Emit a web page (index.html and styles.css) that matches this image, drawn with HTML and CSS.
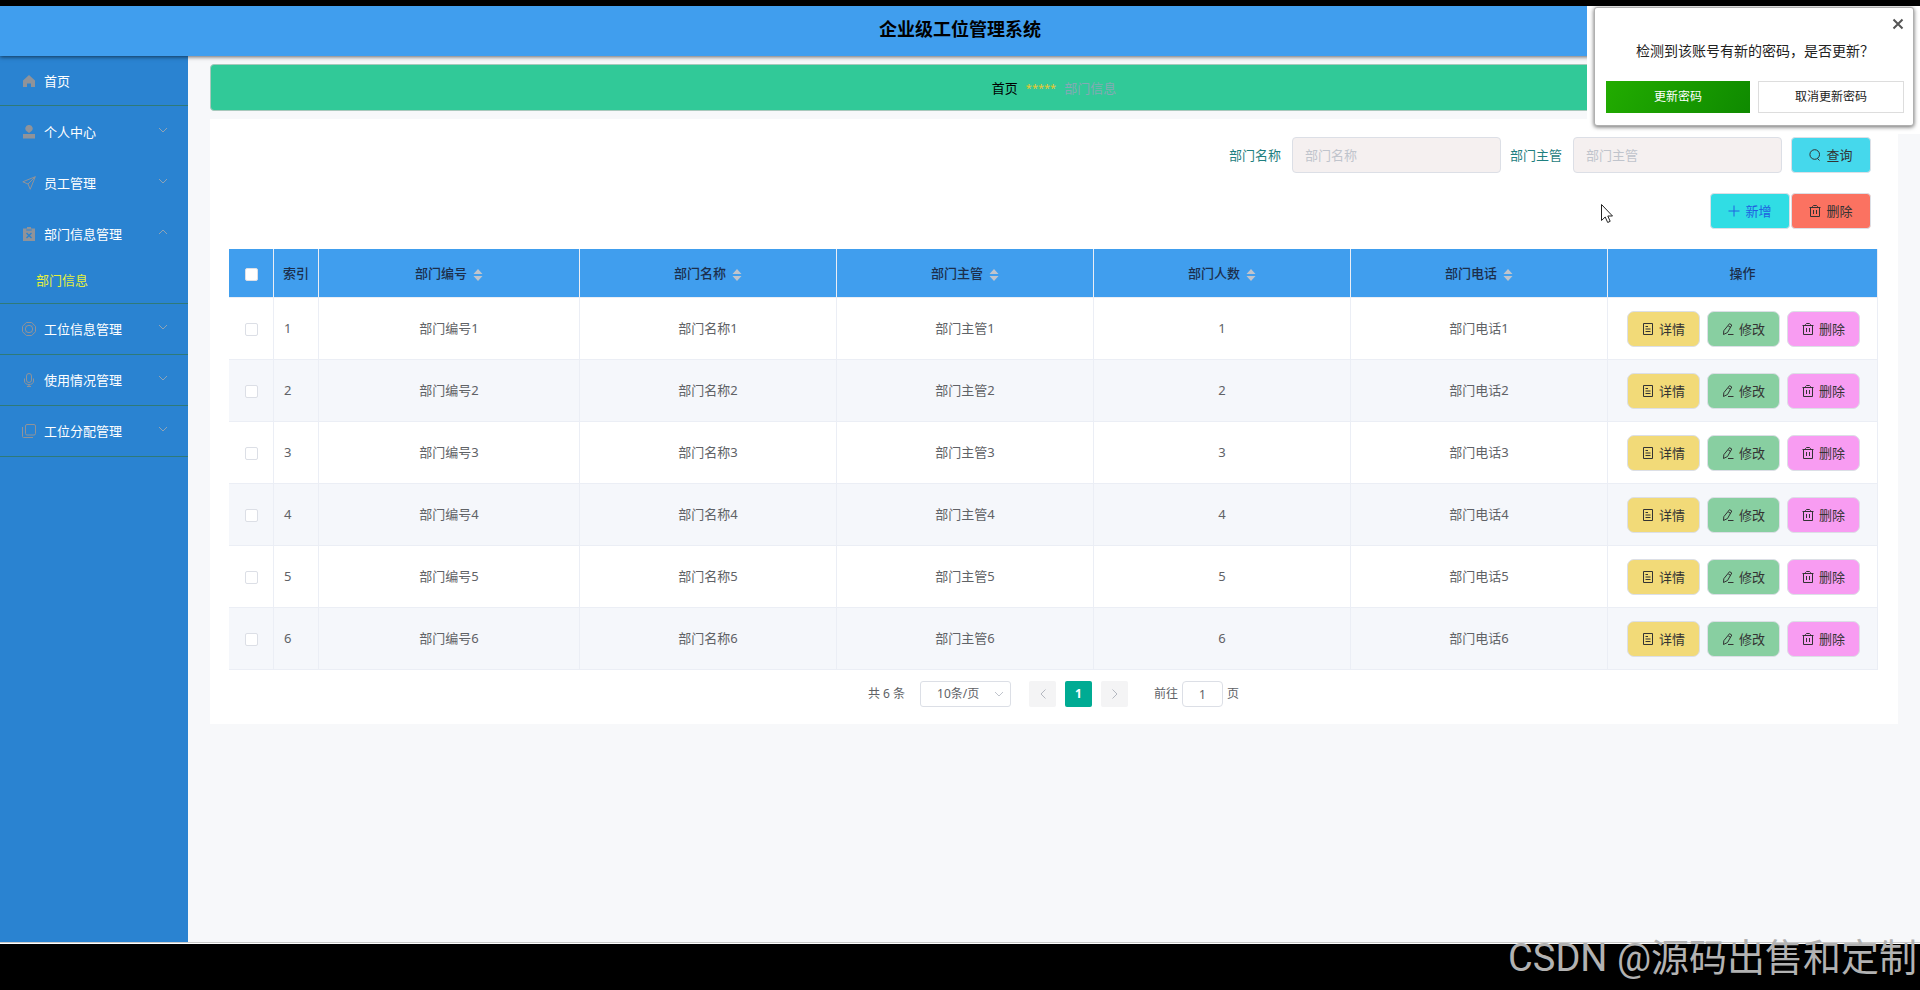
FILE: index.html
```
<!DOCTYPE html>
<html lang="zh-CN">
  <head>
    <meta charset="UTF-8" />
    <meta name="viewport" content="width=device-width, initial-scale=1.0" />
    <title>企业级工位管理系统</title>
    <link rel="stylesheet" href="styles.css">
  </head>
  <body>
    <!-- Icon set -->
    <svg class="sprite" aria-hidden="true">
      <symbol id="i-home" viewBox="0 0 14 14"><path fill="currentColor" d="M7 1 1 6.500V13h4V9.500h4V13h4V6.500z" /></symbol>
      <symbol id="i-user" viewBox="0 0 14 14"><path fill="currentColor" d="M7 0a3.500 3.500 0 0 1 2 6.500L7 8 5 6.500A3.500 3.500 0 0 1 7 0zM1 9h12v4.500H1z" /></symbol>
      <symbol id="i-send" viewBox="0 0 14 14"><path d="M13.300 .7 .8 5.800 6 8l2.200 5.300zM13.300 .7 6 8" /></symbol>
      <symbol id="i-board" viewBox="0 0 14 14"><path fill="currentColor" fill-rule="evenodd" d="M5 0h4v1.500h4V14H1V1.500h4zM4.300 2.500v1h5.400v-1zM5 5.500l-1 1 2 2-2 2 1 1 2-2 2 2 1-1-2-2 2-2-1-1-2 2z" /></symbol>
      <symbol id="i-ring" viewBox="0 0 14 14"><path d="M4.300.5h5.400l3.800 3.800v5.400l-3.800 3.800H4.300L.5 9.700V4.300z" /><circle cx="7" cy="7" r="3.700" /><path d="m2.500 2.500 2 2m5 5 2 2m0-9-2 2m-5 5-2 2" stroke-dasharray="1 1" /></symbol>
      <symbol id="i-mic" viewBox="0 0 14 14"><rect x="4.500" y=".5" width="5" height="9" rx="2.500" /><path d="M2.500 5.500V8c0 2.500 2 3.500 4.500 3.500s4.500-1 4.500-3.500V5.500M7 11.500v2M5 13.500h4" /></symbol>
      <symbol id="i-copy" viewBox="0 0 14 14"><rect x="3.500" y=".5" width="10" height="10.500" rx="1.500" /><path d="M.5 3v9.500c0 .6.400 1 1 1H11" /></symbol>
      <symbol id="i-down" viewBox="0 0 10 6"><path d="m1 1 4 4 4-4" /></symbol>
      <symbol id="i-up" viewBox="0 0 10 6"><path d="m1 5 4-4 4 4" /></symbol>
      <symbol id="i-left" viewBox="0 0 6 10"><path d="M5.500.5 1 5l4.500 4.500" /></symbol>
      <symbol id="i-right" viewBox="0 0 6 10"><path d="M.5.5 5 5 .5 9.500" /></symbol>
      <symbol id="i-search" viewBox="0 0 12 12"><circle cx="5.700" cy="5.500" r="4.800" /><path d="m8.500 9.500 2 2" /></symbol>
      <symbol id="i-plus" viewBox="0 0 12 12"><path d="M6 .5v11M.5 6h11" /></symbol>
      <symbol id="i-trash" viewBox="0 0 12 12"><path d="M.5 2.500h11M3.500 2.500V1.500l1-1h3l1 1v1M1.500 2.500v9h9v-9M4.500 5v4M7.500 5v4" /></symbol>
      <symbol id="i-doc" viewBox="0 0 12 12"><path d="M1.500.5h9v11h-9zM3.500 3.500H6M3.500 6h5M3.500 8.500h5" /></symbol>
      <symbol id="i-edit" viewBox="0 0 12 12"><path d="M7.500.7 9.800 2 5.500 9.500l-4 2 .3-3.800zM6 11.500h5.500M6.300 3l2.300 1.300" /></symbol>
      <symbol id="i-close" viewBox="0 0 12 12"><path d="m1.500 1.500 9 9m0-9-9 9" /></symbol>
      <symbol id="i-sort" viewBox="0 0 10 12"><path fill="currentColor" d="M5 0 9.500 5h-9zM5 12 .5 7h9z" /></symbol>
    </svg>

    <header class="header">
      <h1 class="header-title">企业级工位管理系统</h1>
    </header>

    <div class="layout">
      <nav class="sidebar">
        <a class="menu-item menu-home" href="#"><svg class="menu-icon"><use href="#i-home" /></svg>首页</a>
        <a class="menu-item" href="#"><svg class="menu-icon"><use href="#i-user" /></svg>个人中心<svg class="menu-arrow"><use href="#i-down" /></svg></a>
        <a class="menu-item" href="#"><svg class="menu-icon line"><use href="#i-send" /></svg>员工管理<svg class="menu-arrow"><use href="#i-down" /></svg></a>
        <a class="menu-item" href="#"><svg class="menu-icon"><use href="#i-board" /></svg>部门信息管理<svg class="menu-arrow"><use href="#i-up" /></svg></a>
        <a class="submenu-item" href="#">部门信息</a>
        <a class="menu-item ruled" href="#"><svg class="menu-icon line"><use href="#i-ring" /></svg>工位信息管理<svg class="menu-arrow"><use href="#i-down" /></svg></a>
        <a class="menu-item ruled" href="#"><svg class="menu-icon line"><use href="#i-mic" /></svg>使用情况管理<svg class="menu-arrow"><use href="#i-down" /></svg></a>
        <a class="menu-item ruled" href="#"><svg class="menu-icon line"><use href="#i-copy" /></svg>工位分配管理<svg class="menu-arrow"><use href="#i-down" /></svg></a>
      </nav>

      <main class="main">
        <div class="breadcrumb">
          <a class="crumb-home" href="#">首页</a>
          <span class="crumb-sep">*****</span>
          <span class="crumb-current">部门信息</span>
        </div>

        <section class="card">
          <form class="search">
            <label for="deptName">部门名称</label>
            <input type="text" id="deptName" placeholder="部门名称" />
            <label for="deptManager">部门主管</label>
            <input type="text" id="deptManager" placeholder="部门主管" />
            <button type="button" class="btn btn-search"><svg class="icon"><use href="#i-search" /></svg>查询</button>
          </form>

          <div class="actions">
            <button type="button" class="btn btn-add"><svg class="icon"><use href="#i-plus" /></svg>新增</button>
            <button type="button" class="btn btn-remove"><svg class="icon"><use href="#i-trash" /></svg>删除</button>
          </div>

          <table class="table">
            <colgroup>
              <col class="col-small" />
              <col class="col-small" />
              <col class="col-code" />
              <col />
              <col />
              <col />
              <col />
              <col class="col-actions" />
            </colgroup>
            <thead>
              <tr>
                <th><input type="checkbox" class="check" aria-label="全选" /></th>
                <th>索引</th>
                <th>部门编号<svg class="sort"><use href="#i-sort" /></svg></th>
                <th>部门名称<svg class="sort"><use href="#i-sort" /></svg></th>
                <th>部门主管<svg class="sort"><use href="#i-sort" /></svg></th>
                <th>部门人数<svg class="sort"><use href="#i-sort" /></svg></th>
                <th>部门电话<svg class="sort"><use href="#i-sort" /></svg></th>
                <th>操作</th>
              </tr>
            </thead>
            <tbody id="deptRows"></tbody>
          </table>

          <div class="pagination">
            <span>共 6 条</span>
            <div class="page-size">
              <select aria-label="每页条数">
                <option>10条/页</option>
                <option>20条/页</option>
              </select>
              <svg class="page-size-arrow"><use href="#i-down" /></svg>
            </div>
            <div class="pager">
              <button type="button" class="page-btn" aria-label="上一页"><svg class="page-arrow"><use href="#i-left" /></svg></button>
              <button type="button" class="page-btn active">1</button>
              <button type="button" class="page-btn" aria-label="下一页"><svg class="page-arrow"><use href="#i-right" /></svg></button>
            </div>
            <div class="jump">
              <label for="jumpPage">前往</label>
              <input type="text" id="jumpPage" value="1" />
              <span>页</span>
            </div>
          </div>
        </section>
      </main>
    </div>

    <footer class="footer">CSDN @源码出售和定制</footer>

    <!-- Password prompt -->
    <div class="prompt-wrap">
      <div class="prompt" role="dialog" aria-label="更新密码">
        <button type="button" class="prompt-close" aria-label="关闭"><svg><use href="#i-close" /></svg></button>
        <p class="prompt-text">检测到该账号有新的密码，是否更新？</p>
        <div class="prompt-buttons">
          <button type="button" class="prompt-ok">更新密码</button>
          <button type="button" class="prompt-cancel">取消更新密码</button>
        </div>
      </div>
    </div>

    <svg class="cursor" viewBox="0 0 12 19" aria-hidden="true"><path d="M.5.5v16l3.700-3.500 2.500 5.500 2.500-1.200L6.800 12h4.700z" /></svg>

    <script>
      const rows = document.getElementById("deptRows");
      for (let i = 1; i <= 6; i++) {
        rows.innerHTML += `
          <tr>
            <td><input type="checkbox" class="check" aria-label="选择${i}" /></td>
            <td class="index">${i}</td>
            <td>部门编号${i}</td>
            <td>部门名称${i}</td>
            <td>部门主管${i}</td>
            <td>${i}</td>
            <td>部门电话${i}</td>
            <td class="operate">
              <div class="row-buttons">
                <button type="button" class="btn btn-detail"><svg class="icon"><use href="#i-doc" /></svg>详情</button>
                <button type="button" class="btn btn-edit"><svg class="icon"><use href="#i-edit" /></svg>修改</button>
                <button type="button" class="btn btn-delete"><svg class="icon"><use href="#i-trash" /></svg>删除</button>
              </div>
            </td>
          </tr>`;
      }
    </script>
  </body>
</html>
```
FILE: styles.css
```
* {
  box-sizing: border-box;
}
body {
  display: flex;
  flex-direction: column;
  min-height: 100vh;
  margin: 0;
  border-top: 6px solid #000;
  background: #f7f8fa;
  color: #606266;
  font-family: "Noto Sans", "Noto Sans CJK SC", sans-serif;
  font-size: 13px;
  line-height: 20px;
}
a {
  text-decoration: none;
}
button,
input,
select {
  font: inherit;
}
button {
  cursor: pointer;
}
svg {
  fill: none;
  stroke: currentColor;
  flex: none;
}
symbol path[fill] {
  stroke: none;
}
.sprite {
  position: absolute;
  width: 0;
  height: 0;
}

.header {
  position: relative;
  display: flex;
  align-items: center;
  justify-content: center;
  height: 50px;
  padding-bottom: 4px;
  background: #409eee;
  box-shadow: 0 1px 4px rgba(0, 0, 0, 0.6);
}
.header-title {
  margin: 0;
  color: #000;
  font-size: 18px;
  line-height: 26px;
}

.layout {
  display: flex;
  flex: 1;
  border-bottom: 1px solid #c8c8c8;
}
.sidebar {
  width: 188px;
  background: #2a83d1;
}
.menu-item {
  display: flex;
  align-items: center;
  height: 51px;
  padding: 2px 20px 0 22px;
  border-bottom: 1px solid transparent;
  color: #fff;
}
.menu-home {
  height: 50px;
  padding-top: 0;
}
.menu-home,
.ruled {
  border-bottom-color: #2f7a78;
}
.ruled {
  padding-top: 0;
}
.menu-icon {
  width: 14px;
  height: 14px;
  margin-right: 8px;
  color: #909399;
}
.menu-arrow {
  width: 10px;
  height: 6px;
  margin-left: auto;
  margin-bottom: 4px;
  color: #8fa3b5;
}
.submenu-item {
  display: flex;
  align-items: center;
  height: 45px;
  padding: 0 0 2px 36px;
  border-bottom: 1px solid #2f7a78;
  color: #e6f03c;
}

.main {
  flex: 1;
  padding: 8px 22px 20px;
}
.breadcrumb {
  display: flex;
  align-items: center;
  justify-content: center;
  gap: 8px;
  height: 47px;
  margin-bottom: 8px;
  border: 1px solid #a8c8bc;
  border-radius: 4px;
  background: #31c998;
}
.crumb-home {
  color: #000;
}
.crumb-sep {
  color: #e8c832;
  font-size: 11px;
}
.crumb-current {
  color: #84a9b5;
}

.card {
  padding: 18px 20px 17px 19px;
  background: #fff;
}
.search {
  display: flex;
  align-items: center;
  justify-content: flex-end;
  margin-right: 7px;
}
.search label {
  margin-right: 11px;
  color: #1f8080;
}
.search input {
  width: 209px;
  height: 36px;
  margin-right: 9px;
  padding: 0 12px;
  border: 1px solid #dcdfe6;
  border-radius: 4px;
  background: #f5f0f0;
}
.search input::placeholder {
  color: #c0c4cc;
}
.icon {
  width: 12px;
  height: 12px;
  margin-right: 5px;
}
.btn {
  display: inline-flex;
  align-items: center;
  justify-content: center;
  width: 80px;
  height: 36px;
  padding: 0;
  border: 1px solid #dcdfe6;
  border-radius: 4px;
  color: #333;
}
.btn-search {
  background: #45d8ec;
}
.btn-add {
  background: #30dde4;
  color: #2060e0;
}
.btn-remove {
  background: #fb7261;
}
.actions {
  display: flex;
  justify-content: flex-end;
  gap: 1px;
  margin: 20px 7px 20px 0;
}

.table {
  width: 100%;
  table-layout: fixed;
  border-collapse: separate;
  border-spacing: 0;
  text-align: center;
}
.col-small {
  width: 45px;
}
.col-code {
  width: 261px;
}
.col-actions {
  width: 270px;
}
.table th {
  height: 49px;
  padding: 0;
  border-right: 1px solid #ebeef5;
  border-bottom: 1px solid #ebeef5;
  background: #409eee;
  color: #1c2f4c;
  font-weight: 500;
}
.table td {
  height: 62px;
  padding: 0 0 2px;
  border-right: 1px solid #ebeef5;
  border-bottom: 1px solid #ebeef5;
}
.table tbody tr:nth-child(even) {
  background: #f5f7fb;
}
.table .index {
  padding-left: 10px;
  text-align: left;
}
.table .operate {
  padding: 0 0 0 2px;
}
.sort {
  width: 10px;
  height: 12px;
  margin-left: 6px;
  color: #c0c4cc;
  vertical-align: middle;
}
.check {
  appearance: none;
  width: 13px;
  height: 13px;
  margin: 0;
  border: 1px solid #dcdfe6;
  border-radius: 2px;
  background: #fff;
  vertical-align: middle;
}
.row-buttons {
  display: flex;
  justify-content: center;
  gap: 7px;
}
.row-buttons .btn {
  width: 73px;
  border-radius: 7px;
}
.btn-detail {
  background: #f2da78;
}
.btn-edit {
  background: #88cfa1;
}
.btn-delete {
  background: #f89cf2;
}

.pagination {
  display: flex;
  align-items: center;
  justify-content: center;
  margin-top: 11px;
  font-size: 12px;
}
.page-size {
  position: relative;
  margin: 0 18px 0 15px;
}
.page-size select {
  appearance: none;
  width: 91px;
  height: 26px;
  padding: 0 16px;
  border: 1px solid #dcdfe6;
  border-radius: 3px;
  background: #fff;
  color: #606266;
}
.page-size-arrow {
  position: absolute;
  top: 10px;
  right: 7px;
  width: 10px;
  height: 6px;
  color: #c0c4cc;
}
.pager {
  display: flex;
  gap: 9px;
}
.page-btn {
  display: flex;
  align-items: center;
  justify-content: center;
  width: 27px;
  height: 26px;
  padding: 0;
  border: none;
  border-radius: 2px;
  background: #f4f4f5;
  color: #b4b8c0;
}
.page-btn.active {
  background: #00ab93;
  color: #fff;
  font-weight: bold;
}
.page-arrow {
  width: 6px;
  height: 10px;
}
.jump {
  display: flex;
  align-items: center;
  gap: 4px;
  margin-left: 26px;
}
.jump input {
  width: 41px;
  height: 26px;
  padding: 0;
  border: 1px solid #dcdfe6;
  border-radius: 4px;
  color: #606266;
  text-align: center;
}

.footer {
  height: 47px;
  padding-right: 3px;
  border-top: 1px solid #fff;
  background: #000;
  color: #b2b2b2;
  font-family: Roboto, "Noto Sans CJK SC", sans-serif;
  font-size: 38px;
  line-height: 28px;
  text-align: right;
}

.prompt-wrap {
  position: absolute;
  top: 6px;
  right: 0;
  padding: 1px 6px 8px 7px;
  background: #fff;
}
.prompt {
  width: 320px;
  padding: 10px 9px 12px 11px;
  border: 1px solid #b0b0b0;
  border-radius: 3px;
  background: #fff;
  box-shadow: 0 1px 4px rgba(0, 0, 0, 0.6);
}
.prompt-close {
  display: block;
  margin-left: auto;
  padding: 0;
  border: none;
  background: none;
  color: #555;
}
.prompt-close svg {
  display: block;
  width: 12px;
  height: 12px;
  stroke-width: 2;
}
.prompt-text {
  margin: 11px 0 20px;
  color: #222;
  font-size: 14px;
  text-align: center;
}
.prompt-buttons {
  display: flex;
  gap: 8px;
}
.prompt-buttons button {
  flex: 1;
  height: 32px;
  padding: 0;
  border: 1px solid #ddd;
  background: #fff;
  color: #222;
  font-size: 12px;
}
.prompt-buttons .prompt-ok {
  border: none;
  background: linear-gradient(120deg, #22ac00, #0f8a00);
  color: #fff;
}
.cursor {
  position: absolute;
  top: 204px;
  left: 1601px;
  width: 12px;
  height: 19px;
  fill: #fff;
  stroke: #222;
  pointer-events: none;
}
```
